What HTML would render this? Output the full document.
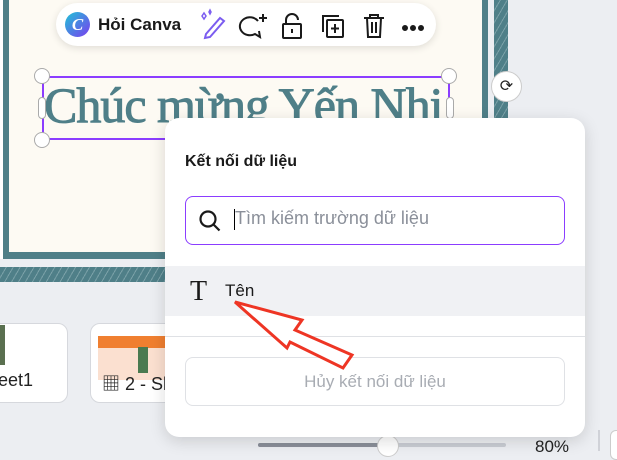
<!DOCTYPE html>
<html><head><meta charset="utf-8"><style>
*{margin:0;padding:0;box-sizing:border-box}
body{width:617px;height:451px;overflow:hidden;background:#eceef2;font-family:"Liberation Sans","Noto Sans CJK SC",sans-serif;position:relative}
.abs{position:absolute}
.hatch{background:repeating-linear-gradient(120deg,#4f7f88 0 5px,#7aa0a7 5px 6px)}
</style></head><body>
<div class="abs hatch" style="left:494px;top:0;width:14px;height:120px"></div>
<div class="abs hatch" style="left:0;top:267px;width:170px;height:15px"></div>
<div class="abs" style="left:0;top:0;width:488px;height:259px;background:#fff"></div>
<div class="abs" style="left:3px;top:0;width:485px;height:259px;background:#4f7f88"></div>
<div class="abs" style="left:9px;top:0;width:473px;height:252px;background:#fdfaf3"></div>
<div class="abs" style="left:56px;top:3px;width:380px;height:43px;background:#fff;border-radius:22px;box-shadow:0 2px 8px rgba(0,0,0,.12)"></div>
<div class="abs" style="left:65px;top:12px;width:25px;height:25px;border-radius:50%;background:linear-gradient(135deg,#1fc3d6,#7b3df0);color:#fff;font:italic bold 17px 'Liberation Serif',serif;text-align:center;line-height:25px">C</div>
<div class="abs" style="left:98px;top:15px;font-size:17px;font-weight:bold;color:#1a1a1a">Hỏi Canva</div>
<svg class="abs" style="left:196px;top:8px" width="240" height="34" viewBox="0 0 240 34" fill="none" stroke="#1a1a1a" stroke-width="2">
<path d="M10 26 L24 10 L28 13 L14 29 L9 30 Z" stroke="#7b5cf0"/><path d="M6 8 l2 -3 l2 3 l-2 3z M13 4 l1-2 l1 2 l-1 2z" stroke="#7b5cf0" stroke-width="1.5"/>
<path d="M62 13 a10 9 0 1 0 -3 13 l5 3 l-1-6" /><path d="M67 6v8M63 10h8"/>
<rect x="87" y="16" width="18" height="14" rx="1"/><path d="M90 16v-4a6 6 0 0 1 12 0"/><path d="M96 21v4"/>
<rect x="131" y="12" width="16" height="17" rx="1"/><path d="M127 24v-16h16"/><path d="M139 16v9M135 20.5h8"/>
<path d="M168 10h20M174 10v-3h8v3M171 10l1 19h12l1-19M176 14v11M180 14v11"/>
<circle cx="209" cy="20" r="2" fill="#1a1a1a"/><circle cx="217" cy="20" r="2" fill="#1a1a1a"/><circle cx="225" cy="20" r="2" fill="#1a1a1a"/>
</svg>
<div class="abs" style="left:42px;top:76px;width:408px;height:64px;border:2px solid #8b3dff"></div>
<div class="abs" style="left:44px;top:76px;font:50px 'Liberation Serif',serif;color:#4f7f88;white-space:nowrap;letter-spacing:-1px;-webkit-text-stroke:1px #4f7f88">Chúc mừng Yến Nhi</div>
<div class="abs" style="left:34px;top:68px;width:16px;height:16px;border-radius:50%;background:#fff;border:1px solid #aaa"></div>
<div class="abs" style="left:441px;top:68px;width:16px;height:16px;border-radius:50%;background:#fff;border:1px solid #aaa"></div>
<div class="abs" style="left:34px;top:132px;width:16px;height:16px;border-radius:50%;background:#fff;border:1px solid #aaa"></div>
<div class="abs" style="left:38px;top:97px;width:8px;height:22px;border-radius:4px;background:#fff;border:1px solid #aaa"></div>
<div class="abs" style="left:446px;top:97px;width:8px;height:22px;border-radius:4px;background:#fff;border:1px solid #aaa"></div>
<div class="abs" style="left:491px;top:71px;width:31px;height:31px;border-radius:50%;background:#fff;border:1px solid #ccc;text-align:center;line-height:29px;font-size:16px;color:#222">⟳</div>
<div class="abs" style="left:-10px;top:323px;width:78px;height:80px;background:#fff;border:1px solid #d6d8dd;border-radius:10px"></div>
<div class="abs" style="left:0;top:325px;width:5px;height:40px;background:#5a7050"></div>
<div class="abs" style="left:-2px;top:370px;font-size:18px;color:#222">eet1</div>
<div class="abs" style="left:90px;top:323px;width:90px;height:80px;background:#fff;border:1px solid #d6d8dd;border-radius:10px;overflow:hidden">
<div class="abs" style="left:7px;top:12px;width:70px;height:12px;background:#f07f30"></div>
<div class="abs" style="left:7px;top:24px;width:70px;height:32px;background:#fbe0d0"></div>
<div class="abs" style="left:47px;top:23px;width:10px;height:26px;background:#4a7a50"></div>
</div>
<div class="abs" style="left:102px;top:370px;font-size:18px;color:#222">▦ 2 - She</div>
<div class="abs" style="left:258px;top:443px;width:248px;height:4px;background:#c9ccd3;border-radius:2px"></div>
<div class="abs" style="left:258px;top:443px;width:130px;height:4px;background:#8a8f99;border-radius:2px"></div>
<div class="abs" style="left:377px;top:435px;width:22px;height:22px;border-radius:50%;background:#fff;border:1px solid #ccc"></div>
<div class="abs" style="left:535px;top:437px;font-size:17px;color:#222">80%</div>
<div class="abs" style="left:598px;top:430px;width:2px;height:21px;background:#d0d2d8"></div>
<div class="abs" style="left:610px;top:430px;width:14px;height:30px;border-radius:6px;background:#fff;border:1px solid #ccc"></div>
<div class="abs" style="left:165px;top:118px;width:420px;height:319px;background:#fff;border-radius:14px;box-shadow:0 4px 16px rgba(0,0,0,.15);overflow:hidden">
<div class="abs" style="left:20px;top:35px;font-size:16px;font-weight:bold;color:#1a1a1a">Kết nối dữ liệu</div>
<div class="abs" style="left:20px;top:78px;width:380px;height:49px;border:1.5px solid #8b3dff;border-radius:8px"></div>
<svg class="abs" style="left:33px;top:91px" width="24" height="24" fill="none" stroke="#1a1a1a" stroke-width="2.2"><circle cx="10" cy="10" r="7.5"/><path d="M15.5 15.5l6 6"/></svg>
<div class="abs" style="left:69px;top:91px;width:1px;height:21px;background:#000"></div>
<div class="abs" style="left:70px;top:90px;font-size:18px;color:#8a8f99">Tìm kiếm trường dữ liệu</div>
<div class="abs" style="left:0;top:148px;width:420px;height:50px;background:#f0f1f4"></div>
<div class="abs" style="left:25px;top:158px;font:28px 'Liberation Serif',serif;color:#1a1a1a">T</div>
<div class="abs" style="left:60px;top:163px;font-size:17px;color:#1a1a1a">Tên</div>
<div class="abs" style="left:0;top:218px;width:420px;height:1px;background:#dfe1e5"></div>
<div class="abs" style="left:20px;top:239px;width:380px;height:49px;border:1px solid #dfe1e5;border-radius:8px;text-align:center;line-height:47px;font-size:17px;color:#a8acb3">Hủy kết nối dữ liệu</div>
</div>
<svg class="abs" style="left:0;top:0" width="617" height="451"><polygon points="235,302 302,320 295,330 352,355 343,368 290,342 287,348" fill="#fff" stroke="#ee3524" stroke-width="3" stroke-linejoin="miter"/></svg>
</body></html>
